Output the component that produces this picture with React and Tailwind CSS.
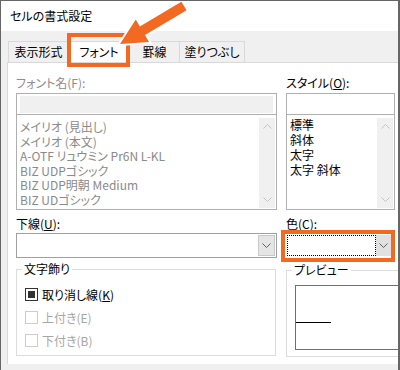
import React from 'react';

// Chevron used by dropdown buttons and scroll bars
const Chevron = ({ up, color = '#5f5f5f' }) => (
  <svg width="9" height="5" viewBox="0 0 9 5" fill="none">
    <path d={up ? 'M0.5 4.5L4.5 0.5L8.5 4.5' : 'M0.5 0.5L4.5 4.5L8.5 0.5'} stroke={color} />
  </svg>
);

const ScrollBar = () => (
  <div className="w-[16px] mt-[3px] mb-[1px] mr-[1px] bg-[#f0f0f0] flex flex-col justify-between">
    <div className="h-[17px] flex items-center justify-center"><Chevron up color="#c4c4c4" /></div>
    <div className="h-[17px] flex items-center justify-center"><Chevron color="#c4c4c4" /></div>
  </div>
);

const Tab = ({ label, className }) => (
  <div className={`h-[21px] border-t border-r border-[#d9d9d9] flex items-center justify-center ${className}`}>
    {label}
  </div>
);

const Check = ({ label, checked, disabled }) => (
  <div className="h-[23px] flex items-center gap-[4px]">
    <div className={`w-[13px] h-[13px] border flex items-center justify-center ${checked ? 'border-[#333]' : 'border-[#cccccc]'}`}>
      {checked && <div className="w-[7px] h-[7px] bg-[#333]" />}
    </div>
    <span className={disabled ? 'text-[#a6a6a6]' : 'text-black'}>{label}</span>
  </div>
);

const fontList = ['メイリオ (見出し)', 'メイリオ (本文)', 'A-OTF リュウミン Pr6N L-KL', 'BIZ UDPゴシック', 'BIZ UDP明朝 Medium', 'BIZ UDゴシック'];
const styleList = ['標準', '斜体', '太字', '太字 斜体'];

export default function App() {
  return (
    <div className="relative w-[400px] h-[370px] overflow-hidden bg-[#f0f0f0] border-t border-l border-r-2 border-[#666] font-['Noto_Sans_CJK_JP',sans-serif] [font-feature-settings:'palt'] text-[12px] leading-[16px] text-black">
      {/* title */}
      <div className="h-[30px] bg-white flex items-center pl-[9px]">セルの書式設定</div>

      {/* tabs */}
      <div className="h-[31px] flex items-end pl-[7px]">
        <Tab label="表示形式" className="w-[61px] border-l" />
        <Tab label="フォント" className="w-[61px] bg-white" />
        <Tab label="罫線" className="w-[50px]" />
        <Tab label="塗りつぶし" className="w-[65px]" />
      </div>

      {/* panel */}
      <div className="ml-[6px] w-[420px] h-[302px] shrink-0 bg-white border-l border-t border-[#d9d9d9] pt-[12px] pl-[8px] flex gap-[9px]">
        {/* left column */}
        <div className="w-[261px] flex flex-col">
          <div className="h-[16px] text-[#8d8d8d]">フォント名(F):</div>
          <div className="mt-[2px] h-[22px] border border-[#b0b0b0] pt-[2px] px-[3px]">
            <div className="h-[17px] bg-[#f0f0f0]" />
          </div>
          <div className="h-[95px] border-l border-r border-b border-[#b0b0b0] flex">
            <div className="flex-1 pl-[3px] pt-[5px] leading-[14.6px] text-[#8a8a8a]">
              {fontList.map((f) => <div key={f} className="whitespace-nowrap">{f}</div>)}
            </div>
            <ScrollBar />
          </div>

          <div className="mt-[6px] h-[16px]">下線(<span className="underline">U</span>):</div>
          <div className="mt-[1px] h-[25px] border border-[#a0a0a0] flex justify-end">
            <div className="w-[17px] m-[1px] bg-[#e5e5e5] border border-[#c9c9c9] flex items-center justify-center">
              <Chevron />
            </div>
          </div>

          <div className="mt-[11px] w-[260px] h-[87px] border border-[#dcdcdc] pl-[8px]">
            <div className="-mt-[9px] -ml-[3px] w-fit px-[2px] bg-white">文字飾り</div>
            <div className="mt-[6px] flex flex-col">
              <Check label={<>取り消し線(<span className="underline">K</span>)</>} checked />
              <Check label="上付き(E)" disabled />
              <Check label="下付き(B)" disabled />
            </div>
          </div>
        </div>

        {/* right column */}
        <div className="flex-1 flex flex-col">
          <div className="h-[16px]">スタイル(<span className="underline">O</span>):</div>
          <div className="mt-[2px] w-[109px] h-[22px] border border-[#b0b0b0] bg-white" />
          <div className="w-[109px] h-[95px] border-l border-r border-b border-[#b0b0b0] flex">
            <div className="flex-1 pl-[3px] pt-[2px] leading-[15px]">
              {styleList.map((s) => <div key={s}>{s}</div>)}
            </div>
            <ScrollBar />
          </div>

          <div className="mt-[6px] h-[16px]">色(<span className="underline">C</span>):</div>
          <div className="-mt-[2px] -ml-[5px] w-[114px] h-[32px] border-4 border-[#f26a21] bg-white flex">
            <div className="ml-[2px] mt-[1px] w-[90px] h-[21px] border border-dotted border-black" />
            <div className="ml-auto mt-[1px] w-[15px] h-[21px] bg-[#e1e1e1] flex items-center justify-center">
              <Chevron />
            </div>
          </div>

          <div className="mt-[8px] w-[130px] h-[87px] border border-[#dcdcdc] pl-[8px]">
            <div className="-mt-[9px] -ml-[3px] w-fit px-[2px] bg-white">プレビュー</div>
            <div className="mt-[7px] h-[65px] border border-[#707070] pt-[36px]">
              <div className="w-[35px] h-px bg-black" />
            </div>
          </div>
        </div>
      </div>

      {/* annotation: orange frame around the Font tab */}
      <div className="absolute left-[66px] top-[32px] w-[63px] h-[34px] border-4 border-[#f26a21]" />

      {/* annotation: orange arrow */}
      <svg className="absolute left-[100px] top-0" width="100" height="60" viewBox="0 0 100 60">
        <polygon
          points="19,43 34.8,18.5 38.8,25.4 80.4,0.7 85.6,9.3 44,34 48,40.9"
          fill="#f26a21"
          stroke="white"
          strokeWidth="4"
          strokeLinejoin="miter"
          paintOrder="stroke"
        />
      </svg>
    </div>
  );
}
